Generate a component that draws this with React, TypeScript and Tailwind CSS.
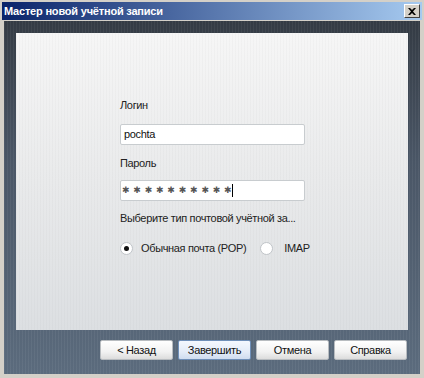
export default function App() {
  return (
    <div className="w-[424px] h-[378px] bg-[#d4d0c8] flex flex-col p-[2px] font-['Liberation_Sans',Arial,sans-serif] text-[11px] tracking-[-0.35px] text-black">
      <div className="h-[18px] flex items-center justify-between pl-[2px] pr-[2px] bg-[linear-gradient(to_right,#0a246a,#a6caf0)]">
        <span className="text-white font-bold text-[11px] leading-none tracking-[-0.2px]">Мастер новой учётной записи</span>
        <div className="w-[16px] h-[14px] bg-[#d4d0c8] border border-t-white border-l-white border-r-[#404040] border-b-[#404040] flex items-center justify-center">
          <svg width="8" height="7" viewBox="0 0 8 7">
            <path d="M0 0 L2 0 L4 2 L6 0 L8 0 L5 3.5 L8 7 L6 7 L4 5 L2 7 L0 7 L3 3.5 Z" fill="#000" />
          </svg>
        </div>
      </div>
      <div className="flex-1 mx-[2px] mt-[1px] mb-[2px] flex flex-col px-[12px] pt-[12px] bg-[repeating-linear-gradient(to_right,rgba(255,255,255,0.05)_0px,rgba(255,255,255,0.05)_1px,transparent_1px,transparent_3px),linear-gradient(to_bottom,#343b44,#4a5666_40%,#5b6b7d)]">
        <div className="h-[297px] flex flex-col pl-[104px] pt-[66px] bg-[repeating-linear-gradient(to_right,rgba(0,0,0,0.02)_0px,rgba(0,0,0,0.02)_1px,transparent_1px,transparent_3px),linear-gradient(to_bottom,#f6f6f6,#e9eaeb_50%,#dcdfe2)]">
          <div className="leading-[13px] text-[#222]">Логин</div>
          <div className="mt-[12px] w-[185px] h-[21px] bg-white border border-[#c8cccf] rounded-[2px] flex items-center pl-[3px] text-[#111]">
            pochta
          </div>
          <div className="mt-[12px] leading-[13px] text-[#222]">Пароль</div>
          <div className="mt-[10px] w-[185px] h-[21px] bg-white border border-[#c8cccf] rounded-[2px] flex items-center pl-[1px] text-[#555]">
            <span className="font-['DejaVu_Sans',sans-serif] text-[9px] leading-none tracking-[3.8px]">✱✱✱✱✱✱✱✱✱✱</span>
            <span className="inline-block w-[1px] h-[13px] bg-black -ml-[3px]" />
          </div>
          <div className="mt-[11px] leading-[13px] text-[#222]">Выберите тип почтовой учётной за...</div>
          <div className="mt-[15px] flex items-center">
            <div className="w-[13px] h-[13px] rounded-full bg-white border border-[#c0c4c8] flex items-center justify-center">
              <div className="w-[5px] h-[5px] rounded-full bg-[#111]" />
            </div>
            <span className="ml-[8px] text-[#222]">Обычная почта (POP)</span>
            <div className="ml-[14px] w-[13px] h-[13px] rounded-full bg-white border border-[#c0c4c8]" />
            <span className="ml-[11px] text-[#222]">IMAP</span>
          </div>
        </div>
        <div className="mt-[10px] flex justify-end gap-[5px] pr-[1px]">
          <button className="w-[73px] h-[20px] rounded-[2px] border border-[#b8bcc0] bg-[linear-gradient(to_bottom,#ffffff,#f2f2f2_60%,#dcdcdc)] text-[#111] text-[11px]">&lt; Назад</button>
          <button className="w-[73px] h-[20px] rounded-[2px] border border-[#6f8fb8] bg-[linear-gradient(to_bottom,#f4f8fe,#e4ecf8_60%,#cfdcef)] text-[#111] text-[11px]">Завершить</button>
          <button className="w-[73px] h-[20px] rounded-[2px] border border-[#b8bcc0] bg-[linear-gradient(to_bottom,#ffffff,#f2f2f2_60%,#dcdcdc)] text-[#111] text-[11px]">Отмена</button>
          <button className="w-[73px] h-[20px] rounded-[2px] border border-[#b8bcc0] bg-[linear-gradient(to_bottom,#ffffff,#f2f2f2_60%,#dcdcdc)] text-[#111] text-[11px]">Справка</button>
        </div>
      </div>
    </div>
  );
}
